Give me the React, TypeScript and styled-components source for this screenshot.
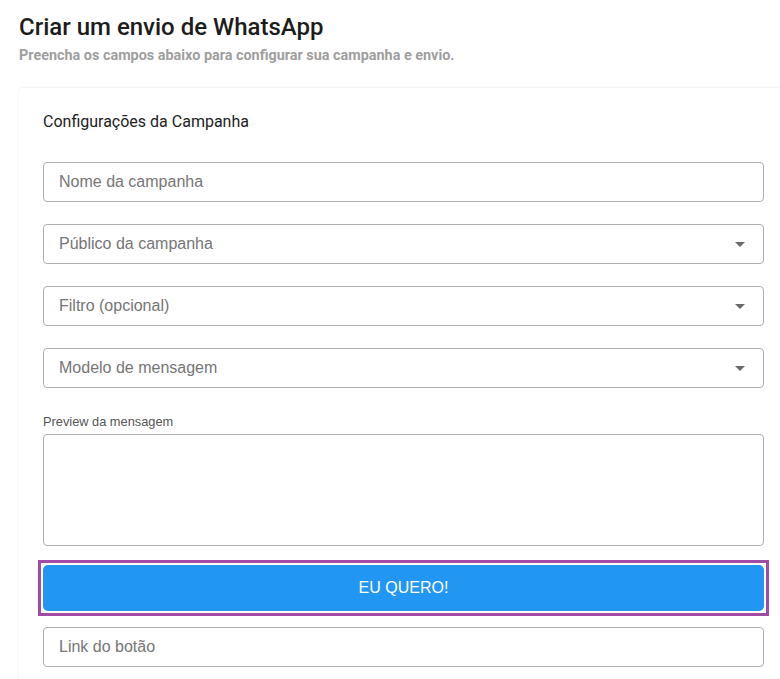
import React from 'react'
import styled, { createGlobalStyle } from 'styled-components'

const GlobalStyle = createGlobalStyle`
    html, body {
        margin: 0;
        padding: 0;
        background: #ffffff;
        overflow: hidden;
    }

    body {
        font-family: Roboto, "Liberation Sans", Arial, sans-serif;
    }
`

const Page = styled.main`
    padding: 12px 0 0 19px;
`

const Title = styled.h1`
    margin: 0;
    font-family: Roboto, "Liberation Sans", sans-serif;
    font-size: 24px;
    font-weight: 500;
    line-height: 30px;
    color: #1c1c1c;
`

const Subtitle = styled.p`
    margin: 5px 0 0;
    font-family: Roboto, "Liberation Sans", sans-serif;
    font-size: 14.4px;
    font-weight: 700;
    line-height: 17px;
    color: #9e9e9e;
`

const Card = styled.section`
    margin-top: 24px;
    margin-right: -9px;
    padding: 24px 25px 20px 24px;
    background: #ffffff;
    border-radius: 4px;
    box-shadow: 0 0 3px rgba(0, 0, 0, 0.06), 0 -1px 2px rgba(0, 0, 0, 0.03);
    display: flex;
    flex-direction: column;
`

const CardTitle = styled.h2`
    margin: 0 0 30px;
    font-family: Roboto, "Liberation Sans", sans-serif;
    font-size: 16px;
    font-weight: 400;
    line-height: 20px;
    color: #222222;
`

const Fields = styled.div`
    display: flex;
    flex-direction: column;
    gap: 22px;
`

const Field = styled.div`
    position: relative;
    height: 40px;
    box-sizing: border-box;
    border: 1px solid #b0b0b0;
    border-radius: 4px;
    display: flex;
    align-items: center;
    padding: 0 15px;
`

const Placeholder = styled.span`
    flex: 1;
    font-family: "Liberation Sans", Arial, sans-serif;
    font-size: 16px;
    color: #767676;
`

const Caret = styled.span`
    width: 0;
    height: 0;
    margin-right: 3px;
    border-left: 5px solid transparent;
    border-right: 5px solid transparent;
    border-top: 5px solid #6b6b6b;
`

const PreviewBlock = styled.div`
    margin-top: 27px;
    display: flex;
    flex-direction: column;
`

const PreviewLabel = styled.label`
    font-family: "Liberation Sans", Arial, sans-serif;
    font-size: 12.8px;
    line-height: 14px;
    color: #555555;
    margin-bottom: 5px;
`

const PreviewBox = styled.div`
    height: 112px;
    box-sizing: border-box;
    border: 1px solid #b0b0b0;
    border-radius: 4px;
`

const ButtonFrame = styled.div`
    margin: 14px -5px 0 -5px;
    padding: 2px;
    border: 3px solid #a24ba4;
`

const ActionButton = styled.button`
    display: block;
    width: 100%;
    height: 46px;
    border: none;
    border-radius: 5px;
    background: #2196f3;
    color: #ffffff;
    font-family: "Liberation Sans", Arial, sans-serif;
    font-size: 16px;
    cursor: pointer;
`

const LinkField = styled(Field)`
    margin-top: 11px;
`

export default function App() {
  return (
    <>
      <GlobalStyle />
      <Page>
        <Title>Criar um envio de WhatsApp</Title>
        <Subtitle>Preencha os campos abaixo para configurar sua campanha e envio.</Subtitle>
        <Card>
          <CardTitle>Configurações da Campanha</CardTitle>
          <Fields>
            <Field>
              <Placeholder>Nome da campanha</Placeholder>
            </Field>
            <Field>
              <Placeholder>Público da campanha</Placeholder>
              <Caret />
            </Field>
            <Field>
              <Placeholder>Filtro (opcional)</Placeholder>
              <Caret />
            </Field>
            <Field>
              <Placeholder>Modelo de mensagem</Placeholder>
              <Caret />
            </Field>
          </Fields>
          <PreviewBlock>
            <PreviewLabel>Preview da mensagem</PreviewLabel>
            <PreviewBox />
          </PreviewBlock>
          <ButtonFrame>
            <ActionButton>EU QUERO!</ActionButton>
          </ButtonFrame>
          <LinkField>
            <Placeholder>Link do botão</Placeholder>
          </LinkField>
        </Card>
      </Page>
    </>
  )
}
